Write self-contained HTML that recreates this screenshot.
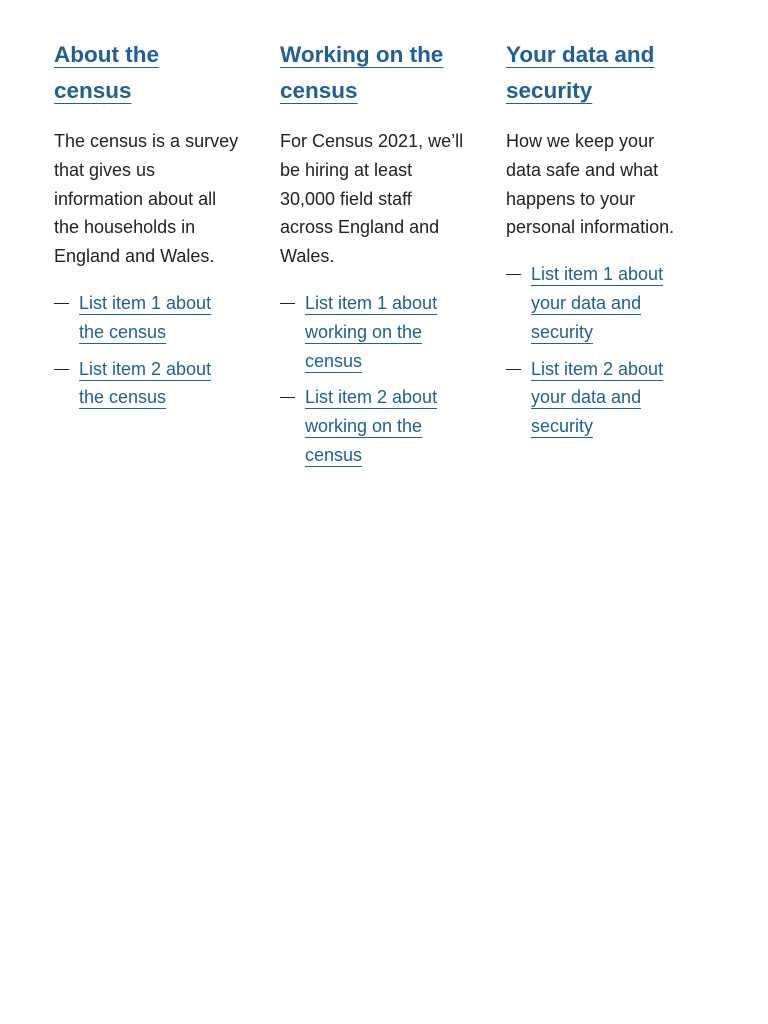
<!DOCTYPE html>
<html><head><meta charset="utf-8"><style>
body{margin:0;background:#fff;font-family:"Liberation Sans",sans-serif;color:#222;}
.col{position:absolute;top:37px;width:220px;}
h2{margin:0;font-size:22.5px;line-height:36px;font-weight:bold;}
a{color:#206095;text-decoration:underline;text-decoration-thickness:1px;text-underline-offset:5px;}
p{margin:18px 0 0;font-size:18px;line-height:28.8px;}
ul{list-style:none;margin:18px 0 0;padding:0;font-size:18px;line-height:28.8px;}
li{position:relative;padding-left:25px;margin-bottom:8px;}
li:before{content:"";position:absolute;left:0;top:14px;width:15px;height:1px;background:#222;}
</style></head><body>
<div class="col" style="left:54px">
<h2><a href="#">About the<br>census</a></h2>
<p>The census is a survey<br>that gives us<br>information about all<br>the households in<br>England and Wales.</p>
<ul><li><a href="#">List item 1 about<br>the census</a></li><li><a href="#">List item 2 about<br>the census</a></li></ul>
</div>
<div class="col" style="left:280px">
<h2><a href="#">Working on the<br>census</a></h2>
<p>For Census 2021, we’ll<br>be hiring at least<br>30,000 field staff<br>across England and<br>Wales.</p>
<ul><li><a href="#">List item 1 about<br>working on the<br>census</a></li><li><a href="#">List item 2 about<br>working on the<br>census</a></li></ul>
</div>
<div class="col" style="left:506px">
<h2><a href="#">Your data and<br>security</a></h2>
<p>How we keep your<br>data safe and what<br>happens to your<br>personal information.</p>
<ul><li><a href="#">List item 1 about<br>your data and<br>security</a></li><li><a href="#">List item 2 about<br>your data and<br>security</a></li></ul>
</div>
</body></html>
